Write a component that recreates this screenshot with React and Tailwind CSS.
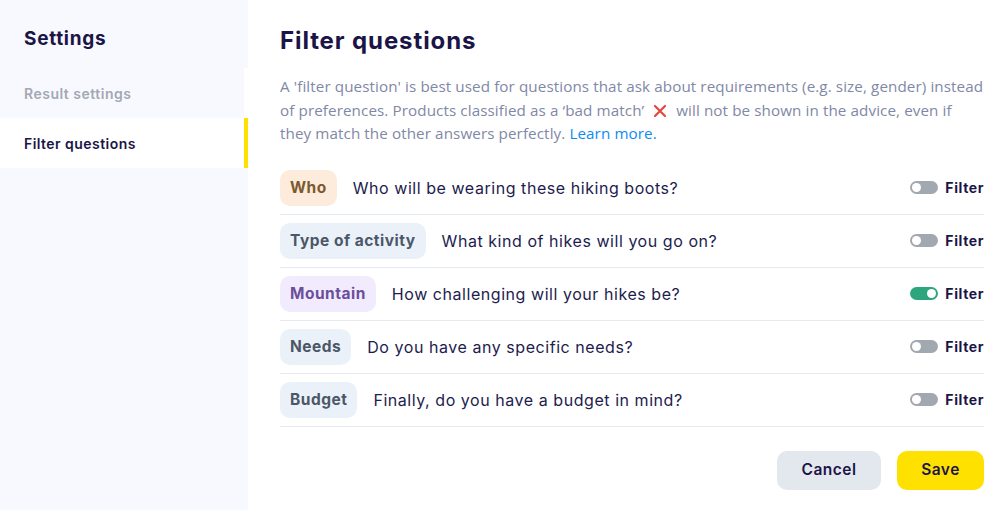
import React from 'react';

const questions = [
  { tag: 'Who', text: 'Who will be wearing these hiking boots?', tone: 'bg-[#fdecdb] text-[#7b5a2e]', on: false },
  { tag: 'Type of activity', text: 'What kind of hikes will you go on?', tone: 'bg-[#ebf1f9] text-[#4b5768]', on: false },
  { tag: 'Mountain', text: 'How challenging will your hikes be?', tone: 'bg-[#f1ebfd] text-[#6b4f9b]', on: true },
  { tag: 'Needs', text: 'Do you have any specific needs?', tone: 'bg-[#ebf1f9] text-[#4b5768]', on: false },
  { tag: 'Budget', text: 'Finally, do you have a budget in mind?', tone: 'bg-[#ebf1f9] text-[#4b5768]', on: false },
];

const Toggle = ({ on }) => (
  <div className={`w-[28px] h-[13px] rounded-full flex items-center px-[2px] ${on ? 'bg-[#2ea67d] justify-end' : 'bg-[#a2a8b0] justify-start'}`}>
    <div className="w-[9px] h-[9px] rounded-full bg-white" />
  </div>
);

const App = () => {
  const [toggles, setToggles] = React.useState(questions.map((q) => q.on));

  return (
    <div className="w-[1005px] h-[510px] flex bg-white text-[#1b1547] font-['Inter',sans-serif] overflow-hidden">
      {/* Sidebar */}
      <aside className="w-[248px] h-full bg-[#f8f9fe] flex flex-col">
        <div className="h-[68px] pl-6 pt-[25px]">
          <h2 className="text-[19px] font-bold tracking-[0.7px]">Settings</h2>
        </div>
        <div className="h-[50px] w-[248px] pl-6 flex items-center border-r-4 border-white text-[14px] font-semibold tracking-[0.5px] text-[#a3a8b3]">
          Result settings
        </div>
        <div className="h-[50px] w-[248px] pl-6 flex items-center bg-white border-r-4 border-[#ffe100] text-[14px] font-semibold tracking-[0.45px]">
          Filter questions
        </div>
      </aside>

      {/* Main */}
      <main className="flex-1 pl-8 pr-[21px] pt-[26px]">
        <h1 className="text-[24px] font-bold tracking-[0.9px] leading-[30px]">Filter questions</h1>
        <p className="mt-[19px] text-[15.2px] leading-[23.5px] text-[#7f88a6] font-['Open_Sans',sans-serif] tracking-[0.1px]">
          A 'filter question' is best used for questions that ask about requirements (e.g. size, gender) instead of preferences. Products classified as a ‘bad match’
          <svg width="14" height="14" viewBox="0 0 14 14" className="inline-block mx-[9px] align-[-2px]">
            <path d="M2 2 L12 12 M12 2 L2 12" stroke="#e5473f" strokeWidth="2.2" strokeLinecap="round" />
          </svg>
          will not be shown in the advice, even if
          <br />
          they match the other answers perfectly.{' '}
          <a href="#" className="text-[#0b8cf2]">Learn more.</a>
        </p>

        <div className="mt-[16px]">
          {questions.map((q, i) => (
            <div key={q.tag} className="h-[53px] flex items-center border-b border-[#e5eaf0]">
              <span className={`h-[36px] px-[10px] rounded-[10px] flex items-center text-[15.5px] font-bold tracking-[0.5px] ${q.tone}`}>{q.tag}</span>
              <span className="ml-4 text-[16px] tracking-[0.55px] text-[#221c4e]">{q.text}</span>
              <button
                className="ml-auto flex items-center gap-[7px]"
                onClick={() => setToggles((t) => t.map((v, j) => (j === i ? !v : v)))}
              >
                <Toggle on={toggles[i]} />
                <span className="text-[14px] font-bold tracking-[0.6px]">Filter</span>
              </button>
            </div>
          ))}
        </div>

        <div className="mt-[24px] flex justify-end gap-4">
          <button className="w-[104px] h-[39px] rounded-[10px] bg-[#e2e8ee] text-[15.5px] font-semibold tracking-[0.5px]">Cancel</button>
          <button className="w-[87px] h-[39px] rounded-[10px] bg-[#ffe100] text-[15.5px] font-semibold tracking-[0.5px]">Save</button>
        </div>
      </main>
    </div>
  );
};

export default App;
